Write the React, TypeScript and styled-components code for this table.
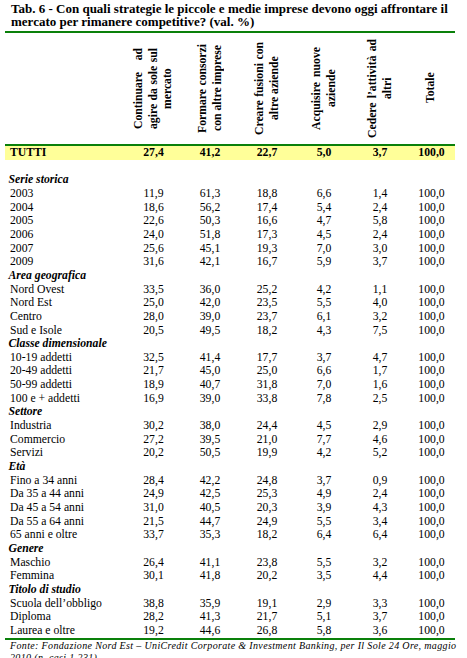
import styled, { createGlobalStyle, css } from 'styled-components'

const GREEN = '#0a800a'
const COLS = '120px 57px 56px 58px 56px 56px 47px'
const ROW_H = 13.66

const GlobalStyle = createGlobalStyle`
  html, body { margin: 0; padding: 0; background: #fff; overflow: hidden; }
`

const Page = styled.div`
  padding-left: 5px;
  width: 450px;
  font-family: "Liberation Serif", "Times New Roman", serif;
  color: #000;
`

const Title = styled.h1`
  margin: 0 0 2.4px;
  padding: 2px 0 0 6px;
  font-size: 13px;
  line-height: 13.3px;
  font-weight: bold;
  white-space: nowrap;
`

const HeaderRow = styled.div`
  display: grid;
  grid-template-columns: ${COLS};
  height: 111px;
  border-top: 2px solid ${GREEN};
  border-bottom: 2px solid ${GREEN};
`

const HeadCell = styled.div`
  display: flex;
  align-items: center;
  justify-content: center;
`

const VText = styled.div<{ $len: number }>`
  writing-mode: vertical-rl;
  transform: rotate(180deg);
  height: ${p => p.$len}px;
  font-size: 11.7px;
  font-weight: bold;
  line-height: 14.5px;
`

const VLine = styled.span<{ $fill?: boolean }>`
  display: block;
  white-space: nowrap;
  text-align: center;
  ${p => p.$fill && css`
    text-align: justify;
    text-align-last: justify;
  `}
`

const Body = styled.div`
  border-bottom: 2px solid ${GREEN};
`

const Row = styled.div<{ $total?: boolean }>`
  display: grid;
  grid-template-columns: ${COLS};
  height: ${ROW_H}px;
  font-size: 11.7px;
  line-height: ${ROW_H}px;
  ${p => p.$total && css`
    font-weight: bold;
    background: #ffff99;
  `}
`

const Label = styled.div`
  padding-left: 5px;
  white-space: nowrap;
`

const Num = styled.div`
  text-align: center;
`

const Section = styled.div`
  height: ${ROW_H}px;
  padding-left: 3.5px;
  font-size: 11.7px;
  line-height: ${ROW_H}px;
  font-weight: bold;
  font-style: italic;
`

const Spacer = styled.div`
  height: ${ROW_H}px;
`

const Footer = styled.div`
  padding-left: 5px;
  font-size: 10px;
  line-height: 12px;
  font-style: italic;
  letter-spacing: 0.35px;
  white-space: nowrap;
`

const headers: { lines: string[]; len: number }[] = [
  { lines: ['Continuare ad', 'agire da sole sul', 'mercato'], len: 81 },
  { lines: ['Formare consorzi', 'con altre imprese'], len: 89 },
  { lines: ['Creare fusioni con', 'altre aziende'], len: 93 },
  { lines: ['Acquisire nuove', 'aziende'], len: 83 },
  { lines: ['Cedere l’attività ad', 'altri'], len: 99 },
  { lines: ['Totale'], len: 40 },
]

type Item = { section: string } | { label: string; v: string[] }

const groups: [string, [string, string][]][] = [
  ['Serie storica', [
    ['2003', '11,9 61,3 18,8 6,6 1,4'],
    ['2004', '18,6 56,2 17,4 5,4 2,4'],
    ['2005', '22,6 50,3 16,6 4,7 5,8'],
    ['2006', '24,0 51,8 17,3 4,5 2,4'],
    ['2007', '25,6 45,1 19,3 7,0 3,0'],
    ['2009', '31,6 42,1 16,7 5,9 3,7'],
  ]],
  ['Area geografica', [
    ['Nord Ovest', '33,5 36,0 25,2 4,2 1,1'],
    ['Nord Est', '25,0 42,0 23,5 5,5 4,0'],
    ['Centro', '28,0 39,0 23,7 6,1 3,2'],
    ['Sud e Isole', '20,5 49,5 18,2 4,3 7,5'],
  ]],
  ['Classe dimensionale', [
    ['10-19 addetti', '32,5 41,4 17,7 3,7 4,7'],
    ['20-49 addetti', '21,7 45,0 25,0 6,6 1,7'],
    ['50-99 addetti', '18,9 40,7 31,8 7,0 1,6'],
    ['100 e + addetti', '16,9 39,0 33,8 7,8 2,5'],
  ]],
  ['Settore', [
    ['Industria', '30,2 38,0 24,4 4,5 2,9'],
    ['Commercio', '27,2 39,5 21,0 7,7 4,6'],
    ['Servizi', '20,2 50,5 19,9 4,2 5,2'],
  ]],
  ['Età', [
    ['Fino a 34 anni', '28,4 42,2 24,8 3,7 0,9'],
    ['Da 35 a 44 anni', '24,9 42,5 25,3 4,9 2,4'],
    ['Da 45 a 54 anni', '31,0 40,5 20,3 3,9 4,3'],
    ['Da 55 a 64 anni', '21,5 44,7 24,9 5,5 3,4'],
    ['65 anni e oltre', '33,7 35,3 18,2 6,4 6,4'],
  ]],
  ['Genere', [
    ['Maschio', '26,4 41,1 23,8 5,5 3,2'],
    ['Femmina', '30,1 41,8 20,2 3,5 4,4'],
  ]],
  ['Titolo di studio', [
    ['Scuola dell’obbligo', '38,8 35,9 19,1 2,9 3,3'],
    ['Diploma', '28,2 41,3 21,7 5,1 3,7'],
    ['Laurea e oltre', '19,2 44,6 26,8 5,8 3,6'],
  ]],
]

const items: Item[] = groups.flatMap(([section, rows]) => [
  { section } as Item,
  ...rows.map(([label, vals]) => ({ label, v: [...vals.split(' '), '100,0'] })),
])

function DataRow(props: { label: string; v: string[]; total?: boolean }) {
  return <Row $total={props.total}>
    <Label>{props.label}</Label>
    {props.v.map((x, i) => <Num key={i}>{x}</Num>)}
  </Row>
}

export default function App() {
  return <Page>
    <GlobalStyle />
    <Title>
      Tab. 6 - Con quali strategie le piccole e medie imprese devono oggi affrontare il<br />
      mercato per rimanere competitive? (val. %)
    </Title>
    <HeaderRow>
      <div />
      {headers.map((h, i) => (
        <HeadCell key={i}>
          <VText $len={h.len}>
            {h.lines.map((l, j) => <VLine key={j} $fill={j < h.lines.length - 1}>{l}</VLine>)}
          </VText>
        </HeadCell>
      ))}
    </HeaderRow>
    <Body>
      <DataRow total label="TUTTI" v={['27,4', '41,2', '22,7', '5,0', '3,7', '100,0']} />
      <Spacer />
      {items.map((it, i) => 'section' in it
        ? <Section key={i}>{it.section}</Section>
        : <DataRow key={i} label={it.label} v={it.v} />)}
    </Body>
    <Footer>
      Fonte: Fondazione Nord Est – UniCredit Corporate &amp; Investment Banking, per Il Sole 24 Ore, maggio<br />
      2010 (n. casi 1.231)
    </Footer>
  </Page>
}
